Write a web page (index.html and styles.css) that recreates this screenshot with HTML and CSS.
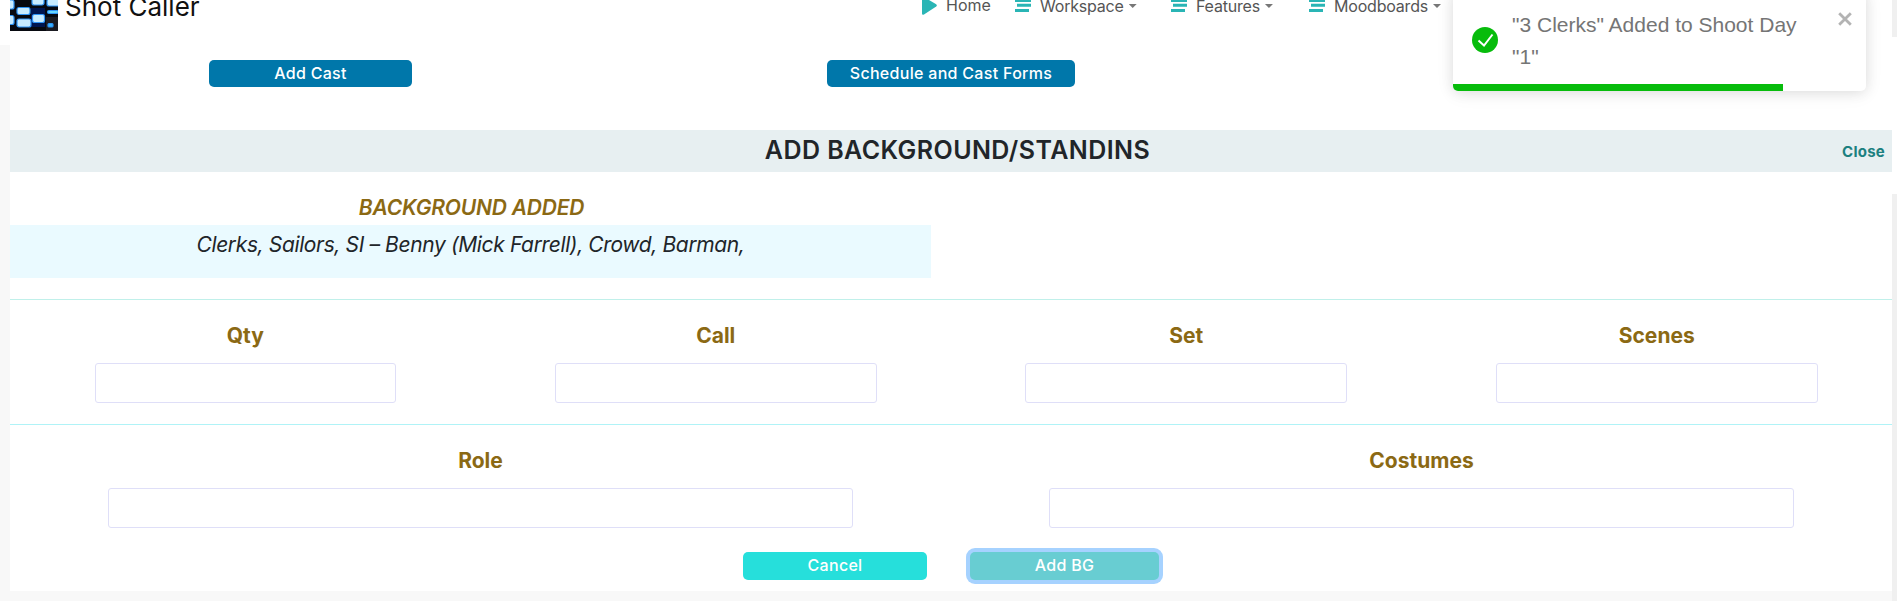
FILE: index.html
```html
<!DOCTYPE html>
<html lang="en">
<head>
<meta charset="utf-8">
<title>Shot Caller</title>
<link rel="stylesheet" href="styles.css">
</head>
<body>
<header class="navbar">
  <svg class="logo" viewBox="0 0 48 31" aria-hidden="true">
    <defs><filter id="soft" x="-20%" y="-20%" width="140%" height="140%"><feGaussianBlur stdDeviation="0.6"/></filter></defs>
    <rect width="48" height="31" fill="#07090f"/>
    <g filter="url(#soft)">
      <rect x="36" y="17" width="12" height="14" fill="#1c1a20"/>
      <rect x="21" y="8" width="14" height="19" fill="#041250"/>
      <g fill="#c8ecff" stroke="#2e94f5" stroke-width="1.2">
        <rect x="-4" y="0" width="8" height="9" rx="2"/>
        <rect x="7" y="7.500" width="13" height="7" rx="2"/>
        <rect x="-4" y="15.500" width="8" height="9" rx="2"/>
        <rect x="7" y="19" width="14" height="8" rx="2"/>
        <rect x="22" y="-3" width="12" height="8" rx="2"/>
        <rect x="22.500" y="14.500" width="12" height="8" rx="2"/>
        <rect x="37" y="-1" width="14" height="7" rx="2"/>
        <rect x="37.500" y="10.500" width="11" height="3" rx="1.500" fill="#66d6ff"/>
        <rect x="38" y="23.500" width="5" height="3.500" rx="1" fill="#39b4ff"/>
      </g>
    </g>
  </svg>
  <span class="brand">Shot Caller</span>
  <nav class="menu">
    <a class="item home"><svg class="play" viewBox="0 0 15 19"><path d="M0 1.500Q0 0 1.500.8L14.200 8.200Q15.500 9.500 14.200 10.500L2 18.500Q0 19.500 0 17.500Z"/></svg><span class="label">Home</span></a>
    <a class="item workspace"><svg class="bars" viewBox="0 0 17 18"><path d="M0 0h14v3H0zM0 5h16v3H0zM2 9.800h14v3H2zM0 15h14v3H0z"/></svg><span class="label">Workspace</span><i class="caret"></i></a>
    <a class="item features"><svg class="bars" viewBox="0 0 17 18"><path d="M0 0h14v3H0zM0 5h16v3H0zM2 9.800h14v3H2zM0 15h14v3H0z"/></svg><span class="label">Features</span><i class="caret"></i></a>
    <a class="item moodboards"><svg class="bars" viewBox="0 0 17 18"><path d="M0 0h14v3H0zM0 5h16v3H0zM2 9.800h14v3H2zM0 15h14v3H0z"/></svg><span class="label">Moodboards</span><i class="caret"></i></a>
  </nav>
</header>
<main class="page">
  <div class="actions">
    <button class="btn blue cast">Add Cast</button>
    <button class="btn blue forms">Schedule and Cast Forms</button>
  </div>
  <div class="titlebar"><h1 class="title">ADD BACKGROUND/STANDINS</h1><a class="close">Close</a></div>
  <section class="added">
    <h2 class="subtitle">BACKGROUND ADDED</h2>
    <p class="list">Clerks, Sailors, SI – Benny (Mick Farrell), Crowd, Barman,</p>
  </section>
  <form class="form">
    <div class="row four">
      <label class="field qty">Qty<input></label>
      <label class="field">Call<input></label>
      <label class="field">Set<input></label>
      <label class="field">Scenes<input></label>
    </div>
    <div class="row two">
      <label class="field">Role<input></label>
      <label class="field">Costumes<input></label>
    </div>
    <div class="buttons">
      <button type="button" class="btn cancel">Cancel</button>
      <button type="button" class="btn add">Add BG</button>
    </div>
  </form>
</main>
<div class="scroll top"></div>
<div class="scroll bottom"></div>
<div class="toast">
  <svg class="ok" viewBox="0 0 26 26"><circle cx="13" cy="13" r="13" fill="#07bc0c"/><path d="M6.500 13.500l5.500 5L20.500 7.500" fill="none" stroke="#fff" stroke-width="2"/></svg>
  <p class="msg">"3 Clerks" Added to Shoot Day<br>"1"</p>
  <svg class="x" viewBox="0 0 14 14"><path d="M1.200 1.200l11.600 11.600M12.800 1.200L1.200 12.800" stroke="#b3b3b3" stroke-width="2.800"/></svg>
  <div class="progress"></div>
</div>
</body>
</html>
```
FILE: styles.css
```css
* { box-sizing: border-box; }
body {
  margin: 0;
  height: 601px;
  overflow: hidden;
  position: relative;
  background: #f8f8f8;
  color: #212529;
  font-family: Inter, "Liberation Sans", sans-serif;
}
h1, h2, p { margin: 0; }

.navbar {
  height: 45px;
  padding-left: 10px;
  display: flex;
  align-items: flex-start;
  background: #fff;
}
.logo { width: 48px; height: 31px; }
.brand { width: 864px; padding-left: 7px; margin-top: -11px; font-size: 26px; line-height: 36px; color: #111; white-space: nowrap; }
.menu { display: flex; margin-top: -8px; color: #555; font-size: 16px; line-height: 28px; }
.item { display: flex; }
.home { width: 93px; }
.workspace { width: 156px; }
.features { width: 138px; }
.label { letter-spacing: -.2px; }
.home .label { margin-left: 9px; line-height: 26px; letter-spacing: 0; }
.play { width: 15px; height: 19px; margin: 4px 0 0 0; fill: #2ab5b5; }
.bars { width: 17px; height: 18px; margin: 2px 8px 0 0; fill: #2ab5b5; }
.caret { width: 8px; height: 4px; margin: 12px 0 0 5px; background: #777; clip-path: polygon(0 0, 100% 0, 50% 100%); }

.page { width: 1882px; height: 546px; margin-left: 10px; background: #fff; }
.actions { height: 85px; padding-top: 15px; display: grid; grid-template-columns: 601px 680px 601px; justify-items: center; align-items: start; }
.btn {
  height: 27px;
  padding: 0 0 1px;
  border: 0;
  border-radius: 5px;
  color: #fff;
  font: 500 16px/26px Inter, "Liberation Sans", sans-serif;
}
.blue { background: #0077aa; letter-spacing: .3px; }
.cast { width: 203px; }
.forms { width: 248px; }

.titlebar { height: 42px; padding-right: 7px; display: grid; grid-template-columns: 1fr auto 1fr; align-items: center; background: #e7eff1; }
.title { grid-column: 2; padding-left: 20px; font-size: 25px; font-weight: 600; line-height: 40px; letter-spacing: .43px; margin-top: -2px; }
.close { justify-self: end; color: #1c8080; font-size: 15px; font-weight: 700; letter-spacing: .25px; }

.added { width: 921px; padding-top: 22px; text-align: center; font-style: italic; }
.subtitle { height: 31px; padding-left: 2px; color: #8b6914; font-size: 21px; font-weight: 600; line-height: 28px; letter-spacing: -.2px; }
.list { height: 53px; background: #eafaff; font-size: 21px; line-height: 40px; letter-spacing: -.37px; }

.row { display: grid; text-align: center; }
.four { margin-top: 21px; height: 125px; grid-template-columns: repeat(4, 1fr); border-top: 1px solid #c0f0ea; }
.two { height: 128px; grid-template-columns: repeat(2, 1fr); border-top: 1px solid #b0f3f7; }
.field { display: flex; flex-direction: column; align-items: center; padding-top: 22px; color: #8b6914; font-size: 21px; font-weight: 700; line-height: 28px; }
.field input { width: 322px; height: 40px; margin-top: 13px; border: 1px solid #dfdff8; border-radius: 3px; background: #fff; }
.qty input { width: 301px; }
.two input { width: 745px; }
.buttons { display: flex; padding-left: 733px; gap: 43px; }
.buttons .btn { height: 28px; padding-bottom: 2px; letter-spacing: .3px; }
.cancel { width: 184px; background: #26dfdb; }
.add { width: 189px; background: #68cdd2; box-shadow: 0 0 0 4px #a6d2ff; }

/* Scrollbar track segments along the right edge */
.scroll { position: absolute; right: 0; width: 5px; background: #f0f0f0; }
.scroll.top { top: 0; height: 37px; }
.scroll.bottom { top: 194px; bottom: 0; }
.page::after { content: ""; position: absolute; right: 0; top: 37px; width: 5px; height: 157px; background: #fff; }

.toast {
  position: absolute;
  left: 1453px;
  top: -10px;
  width: 413px;
  height: 101px;
  padding: 18px 14px 0 19px;
  display: flex;
  background: #fff;
  border-radius: 5px;
  box-shadow: 0 1px 13px rgba(0, 0, 0, .1), 0 3px 20px rgba(0, 0, 0, .06);
  color: #757575;
  font-family: "Liberation Sans", Arial, sans-serif;
}
.ok { width: 26px; height: 26px; margin: 19px 14px 0 0; }
.msg { flex: 1; margin-top: 1px; font-size: 21px; line-height: 32px; }
.x { width: 14px; height: 14px; margin-top: 4px; }
.progress { position: absolute; left: 0; bottom: 0; width: 330px; height: 7px; background: #07bc0c; border-bottom-left-radius: 5px; }
```
